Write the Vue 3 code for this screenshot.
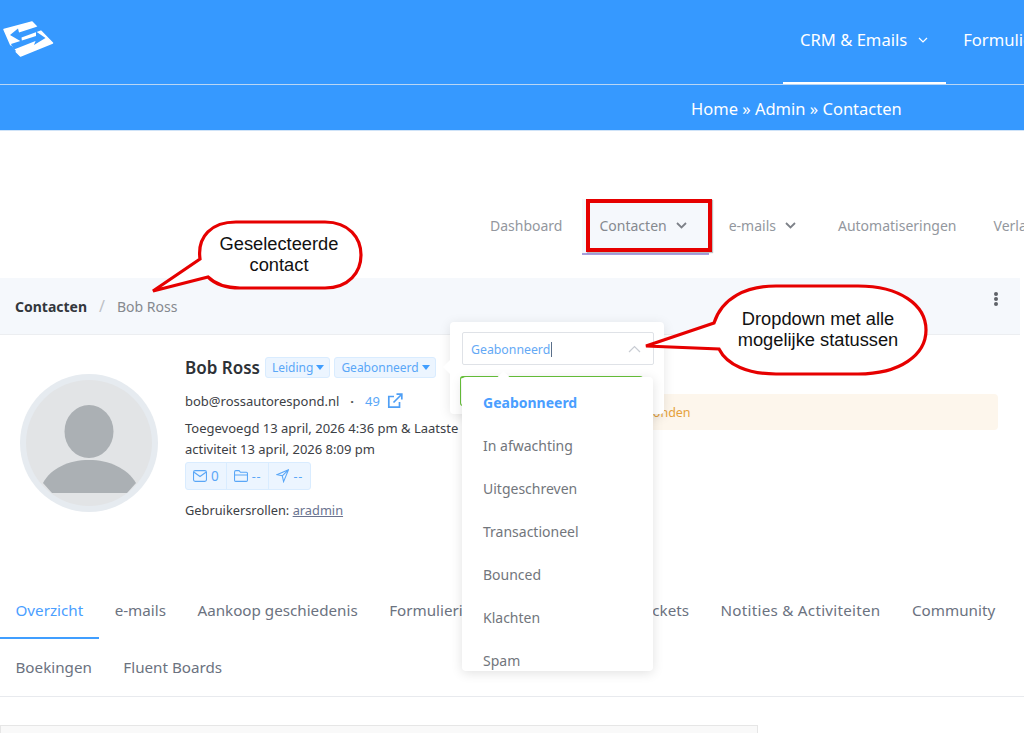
<script setup>
const statuses = ['Geabonneerd', 'In afwachting', 'Uitgeschreven', 'Transactioneel', 'Bounced', 'Klachten', 'Spam']
const subNav = [
  { label: 'Dashboard' },
  { label: 'Contacten', caret: true, active: true },
  { label: 'e-mails', caret: true },
  { label: 'Automatiseringen' },
  { label: 'Verlaten' }
]
const tabs = ['Overzicht', 'e-mails', 'Aankoop geschiedenis', 'Formulierinzendingen', 'Support Tickets', 'Notities & Activiteiten', 'Community', 'Boekingen', 'Fluent Boards']
</script>

<template>
  <div class="page">
    <header class="topbar">
      <svg class="logo" viewBox="0 15 60 48" width="60" height="48">
        <path fill="#fff" stroke="#fff" stroke-width="1.500" stroke-linejoin="round" d="M4 29.500L32 22L52.500 43L20.500 56L15.500 51L11 45.500Z"/>
        <path fill="#3699ff" d="M10 35L18 28.500L19 32.500L36 27L45 23L42 30L21.500 37.500L22 42Z"/>
        <path fill="#3699ff" d="M45.500 38L36 31.500L36 36L11 44L14 49.500L35.500 41L34 45Z"/>
        <path fill="#3699ff" d="M36 20L60 20L60 30L42.500 30L38 28Z"/>
        <path fill="#3699ff" d="M2 46L11.500 45.500L16 51L10 58L2 58Z"/>
      </svg>
      <nav class="mainnav">
        <a class="mainnav-item on">CRM &amp; Emails
          <svg width="10" height="6" viewBox="0 0 10 6"><path d="M1 1l4 4 4-4" fill="none" stroke="#fff" stroke-width="1.200"/></svg>
        </a>
        <a class="mainnav-item">Formulieren</a>
      </nav>
    </header>
    <div class="crumbbar">Home » Admin » Contacten</div>

    <nav class="subnav">
      <a v-for="item in subNav" :key="item.label" class="subnav-item" :class="{ on: item.active }">
        {{ item.label }}
        <svg v-if="item.caret" width="11" height="7" viewBox="0 0 11 7"><path d="M1 1l4.500 4.500L10 1" fill="none" stroke="#7d8188" stroke-width="1.800"/></svg>
      </a>
    </nav>

    <div class="crumbs">
      <b>Contacten</b><span class="slash">/</span><span class="current">Bob Ross</span>
      <span class="more"><i></i><i></i><i></i></span>
    </div>

    <section class="profile">
      <div class="avatar">
        <svg viewBox="0 0 138 138" width="138" height="138">
          <circle cx="69" cy="69" r="69" fill="#e6ebf0"/>
          <circle cx="69" cy="69" r="63" fill="#e2e4e6"/>
          <ellipse cx="69" cy="57.500" rx="24.500" ry="26.500" fill="#abb0b4"/>
          <path d="M23 109c8-15 26-23 46-23s38 8 47 23l-9 10H32z" fill="#abb0b4"/>
        </svg>
      </div>
      <div class="info">
        <div class="name-row">
          <h2>Bob Ross</h2>
          <span class="tag">Leiding<i class="tri"></i></span>
          <span class="tag">Geabonneerd<i class="tri"></i></span>
        </div>
        <div class="mail-row">
          <span>bob@rossautorespond.nl</span><span class="dot">·</span><span class="num">49</span>
          <svg width="16" height="16" viewBox="0 0 16 16" fill="none" stroke="#4f9ff5" stroke-width="1.700"><path d="M12.500 9v5.200H1.800V3.500H7"/><path d="M9.500 1.200h5.300v5.300M14.500 1.500L6.500 9.500"/></svg>
        </div>
        <p class="dates">Toegevoegd 13 april, 2026 4:36 pm &amp; Laatste activiteit 13 april, 2026 8:09 pm</p>
        <div class="stats">
          <span class="stat">
            <svg width="14" height="12" viewBox="0 0 13 11" fill="none" stroke="#5aa7f7"><rect x=".5" y=".5" width="12" height="10" rx="1.500"/><path d="M1 2l5.500 4L12 2"/></svg>
            <span class="count">0</span>
          </span>
          <span class="stat">
            <svg width="14" height="12" viewBox="0 0 13 11" fill="none" stroke="#5aa7f7"><path d="M.5 2c0-.8.500-1.500 1.200-1.500h3L6 2h5.500c.6 0 1 .4 1 1v6.500c0 .6-.4 1-1 1h-10c-.6 0-1-.4-1-1zM.5 4.500h12"/></svg>
            <span class="dash">--</span>
          </span>
          <span class="stat">
            <svg width="13" height="14" viewBox="0 0 12 13" fill="none" stroke="#5aa7f7"><path d="M11.500.8L.8 5.300l5 1 1.200 5.400zM5.800 6.300L11.500.8"/></svg>
            <span class="dash">--</span>
          </span>
        </div>
        <div class="roles">Gebruikersrollen: <u>aradmin</u></div>
      </div>
      <div class="notice">gevonden</div>
    </section>

    <div class="tabs">
      <a v-for="(tab, i) in tabs" :key="tab" class="tab" :class="{ on: i === 0, long: i === 5 }">{{ tab }}</a>
    </div>

    <div class="panel"></div>

    <!-- popover met de status-select, ligt over de inhoud -->
    <div class="popover">
      <i class="pop-arrow"></i>
      <div class="select">
        <span class="select-val">Geabonneerd</span><span class="caretline"></span>
        <svg width="13" height="8" viewBox="0 0 13 8"><path d="M1 7l5.500-5.500L12 7" fill="none" stroke="#c8ccd3" stroke-width="1.200"/></svg>
      </div>
      <div class="greenbtn"></div>
    </div>
    <div class="dropdown">
      <i class="drop-arrow"></i>
      <ul>
        <li v-for="(s, i) in statuses" :key="s" :class="{ sel: i === 0 }">{{ s }}</li>
      </ul>
    </div>

    <!-- annotaties uit de screenshot -->
    <div class="redbox"></div>
    <svg class="callout" width="1024" height="733" viewBox="0 0 1024 733">
      <path class="bubble" d="M153 291L200 259C197 236 212 222 236 222H325C349 222 361 238 361 255C361 272 349 288 325 288H240C226 288 215 284 208 277Z"/>
      <text class="bubble-text" x="279" y="249.500">Geselecteerde</text>
      <text class="bubble-text" x="279" y="271">contact</text>
      <path class="bubble" d="M646 346L714 323C722 298 746 286 776 286H858C900 286 926 305 926 330C926 355 900 374 858 374H776C748 374 727 365 719 349Z"/>
      <text class="bubble-text" x="818" y="325">Dropdown met alle</text>
      <text class="bubble-text" x="818" y="346">mogelijke statussen</text>
    </svg>
  </div>
</template>

<style>
html, body { margin: 0; background: #fff; overflow: hidden; }
</style>

<style scoped>
.page { position: relative; width: 1024px; height: 733px; overflow: hidden; background: #fff; font-family: "Noto Sans", "Open Sans", sans-serif; color: #3c4045; }
a { cursor: pointer; }

.topbar { height: 84px; background: #3699ff; border-bottom: 1px solid #b9d6f5; display: flex; box-sizing: content-box; }
.logo { margin-top: 15px; flex: none; }
.mainnav { display: flex; margin-left: 723px; height: 84px; white-space: nowrap; }
.mainnav-item { color: #fff; font-size: 16.600px; height: 84px; padding: 0 18px 2px 17px; display: flex; align-items: center; gap: 11px; box-sizing: border-box; border-bottom: 2px solid transparent; line-height: 1; }
.mainnav-item.on { border-bottom-color: #fff; }
.crumbbar { height: 45px; background: #3699ff; color: #fff; font-size: 16.500px; line-height: 48px; padding-left: 691px; border-bottom: 1px solid #cfe3f8; white-space: nowrap; }

.subnav { display: flex; height: 147px; box-sizing: border-box; padding: 68px 0 0 473px; white-space: nowrap; }
.subnav-item { height: 56px; padding: 0 17px 2px; font-size: 14px; color: #93979e; margin-right: 3px; display: flex; align-items: center; gap: 9px; box-sizing: border-box; border-bottom: 2px solid transparent; }
.subnav-item svg { margin-right: 5px; }
.subnav-item.on { background: #f5f8fc; border-bottom-color: #a79fdd; color: #85898f; }

.crumbs { height: 57px; width: 1020px; background: #f5f8fc; border-bottom: 1px solid #eceef1; display: flex; align-items: center; padding-left: 15px; box-sizing: border-box; font-size: 14px; position: relative; }
.crumbs b { font-weight: 700; color: #33373c; }
.slash { margin: 0 12px; color: #bdc1c6; font-size: 16px; }
.current { color: #85898f; }
.more { position: absolute; left: 994px; top: 14px; display: flex; flex-direction: column; gap: 1px; }
.more i { width: 4px; height: 4px; border-radius: 50%; background: #5f6368; }

.profile { height: 247px; display: flex; position: relative; }
.avatar { margin: 39px 0 0 20px; width: 138px; height: 138px; }
.info { margin-left: 27px; width: 290px; padding-top: 20px; }
.name-row { display: flex; align-items: center; height: 25px; }
.name-row h2 { margin: 0 5px 0 0; font-size: 17px; font-weight: 600; color: #2d3136; white-space: nowrap; }
.tag { height: 21px; line-height: 20px; padding: 0 5px 0 6px; margin-right: 4px; font-size: 12px; color: #5aa7f7; background: #ecf5ff; border: 1px solid #d9ecff; border-radius: 3px; box-sizing: border-box; white-space: nowrap; display: flex; align-items: center; gap: 3px; }
.tri { width: 0; height: 0; border: 4px solid transparent; border-top: 5px solid #409eff; border-bottom: 0; }
.mail-row { display: flex; align-items: center; font-size: 13px; margin-top: 11px; height: 20px; }
.dot { margin: 0 11px; font-weight: 700; color: #555; }
.num { color: #5aa7f7; margin-right: 7px; }
.dates { margin: 7px 0 0; font-size: 13px; line-height: 20.500px; width: 290px; }
.stats { display: inline-flex; margin-top: 3px; height: 28px; background: #ecf5ff; border: 1px solid #d9ecff; border-radius: 3px; box-sizing: border-box; }
.stat { display: flex; align-items: center; gap: 4px; padding: 0 7px; font-size: 12.500px; color: #5aa7f7; border-left: 1px solid #d9ecff; }
.stat:first-child { border-left: 0; }
.count { font-size: 13.500px; }
.dash { letter-spacing: .8px; }
.roles { margin-top: 11px; font-size: 12.800px; }
.roles u { color: #6a7390; }
.notice { position: absolute; left: 480px; top: 59px; width: 518px; height: 36px; background: #fdf6ec; border-radius: 4px; color: #e6a23c; font-size: 12.500px; line-height: 38px; text-align: left; padding-left: 152px; box-sizing: border-box; }

.tabs { display: flex; flex-wrap: wrap; align-content: flex-start; height: 114px; border-bottom: 1px solid #e8eaee; box-sizing: content-box; white-space: nowrap; }
.tab { height: 57px; line-height: 57px; padding: 0 16px 0 15.500px; font-size: 15.200px; color: #6b7280; box-sizing: border-box; }
.tab.on { color: #4a9eff; border-bottom: 2px solid #409eff; }
.tab.long { letter-spacing: .27px; }

.panel { margin-top: 28px; width: 758px; height: 60px; background: #f9f9f9; border: 1px solid #e6e6e6; box-sizing: border-box; }

.popover { position: absolute; left: 450px; top: 322px; width: 214px; height: 92px; background: #fff; border-radius: 4px; box-shadow: 0 2px 12px rgba(0, 0, 0, .1); padding: 10px 10px 0 12px; box-sizing: border-box; }
.pop-arrow { position: absolute; left: -5px; top: 40px; width: 10px; height: 10px; background: #fff; transform: rotate(45deg); }
.select { height: 33px; border: 1px solid #dfe2e7; border-radius: 2px; display: flex; align-items: center; padding: 1px 12px 0 8px; box-sizing: border-box; font-size: 12.300px; color: #64a9f5; }
.select svg { margin-left: auto; }
.caretline { width: 1px; height: 15px; background: #5a6f8a; margin-left: 1px; }
.greenbtn { margin: 11px 0 0 -2px; width: 183px; height: 30px; border: 1px solid #67c23a; border-top-width: 2px; border-radius: 3px; box-sizing: border-box; }
.dropdown { position: absolute; left: 462px; top: 377px; width: 191px; height: 294px; background: #fff; border-radius: 4px; box-shadow: 0 2px 12px rgba(0, 0, 0, .12); }
.drop-arrow { position: absolute; left: 37px; top: -4px; width: 9px; height: 9px; background: #fff; transform: rotate(45deg); }
.dropdown ul { margin: 0; padding: 4px 0 0; list-style: none; height: 294px; overflow: hidden; border-radius: 4px; position: relative; box-sizing: border-box; }
.dropdown li { height: 43px; line-height: 43px; padding-left: 21px; font-size: 14px; color: #72767c; white-space: nowrap; }
.dropdown li.sel { color: #4a9eff; font-weight: 700; }

.redbox { position: absolute; left: 586px; top: 199px; width: 126px; height: 53px; border: 4px solid #e60000; box-sizing: border-box; box-shadow: 1px 1px 1px rgba(0, 0, 0, .25); }
.callout { position: absolute; left: 0; top: 0; pointer-events: none; }
.bubble { fill: #fff; stroke: #e60000; stroke-width: 3.200; stroke-linejoin: miter; }
.bubble-text { font-family: "Liberation Sans", Arial, sans-serif; font-size: 18.300px; fill: #111; text-anchor: middle; }
</style>
